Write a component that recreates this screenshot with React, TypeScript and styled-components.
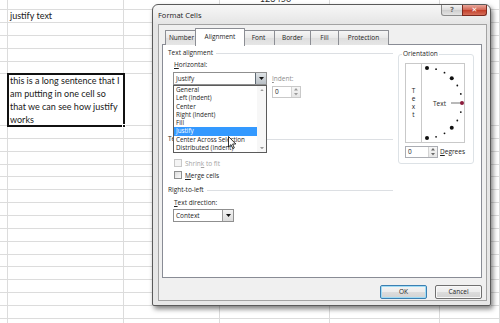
import React from "react";
import styled, { createGlobalStyle, css } from "styled-components";

const Global = createGlobalStyle`
  html, body { margin: 0; padding: 0; background: #fff; }
  body { width: 500px; height: 323px; overflow: hidden; font-family: "Open Sans", "Noto Sans", sans-serif; }
  * { box-sizing: border-box; }
`;

const COLS = [8, 116, 96, 110, 110, 60];
const ROWS = [10.2, 12.87, 12.87, 12.87, 12.87, 12.87, 51.45, ...Array(16).fill(12.87)];

const Stage = styled.div`
  position: relative;
  width: 500px;
  height: 323px;
  overflow: hidden;
  background: #fff;
`;

const Sheet = styled.div`
  display: grid;
  grid-template-columns: ${COLS.map((c) => c + "px").join(" ")};
  grid-template-rows: ${ROWS.map((r) => r + "px").join(" ")};
  width: 500px;
`;

const Cell = styled.div<{ $selected?: boolean }>`
  position: relative;
  border-right: 1px solid #dcdcdc;
  border-bottom: 1px solid #dcdcdc;
  font-family: Lato, "Open Sans", sans-serif;
  font-size: 9px;
  color: #202020;
  line-height: 12.87px;
  padding-left: 2px;
  white-space: nowrap;
  overflow: visible;
  ${(p) =>
    p.$selected &&
    css`
      outline: 2px solid #111;
      outline-offset: -1px;
      z-index: 1;
      line-height: 13px;
    `}
`;

const HeaderNum = styled.div`
  text-align: center;
  transform: translateY(-7px);
  color: #303030;
`;

const FillHandle = styled.span`
  position: absolute;
  right: -3px;
  bottom: -3px;
  width: 4px;
  height: 4px;
  background: #111;
  border: 1px solid #fff;
`;

/* ---------- dialog ---------- */

const Window = styled.div`
  position: absolute;
  left: 152px;
  top: 4px;
  width: 339px;
  height: 302px;
  border: 1px solid #5a5a5a;
  border-radius: 6px 6px 2px 2px;
  background: linear-gradient(#f7f7f7, #e4e4e4 20px, #e7e7e7);
  box-shadow: 2px 3px 5px rgba(0, 0, 0, 0.5);
  display: flex;
  flex-direction: column;
`;

const TitleBar = styled.div`
  height: 19px;
  display: flex;
  align-items: flex-start;
  padding-left: 5px;
`;

const Title = styled.div`
  margin-top: 5px;
  font-size: 7.5px;
  line-height: 10px;
  color: #1a1a1a;
`;

const Caption = styled.div`
  margin-left: auto;
  margin-right: 3px;
  display: flex;
`;

const CaptionBtn = styled.div<{ $close?: boolean }>`
  width: ${(p) => (p.$close ? 25 : 22)}px;
  height: 11px;
  border: 1px solid ${(p) => (p.$close ? "#7c2a1f" : "#8a8a8a")};
  border-top: none;
  margin-left: -1px;
  border-radius: ${(p) => (p.$close ? "0 0 3px 0" : "0 0 0 3px")};
  background: ${(p) =>
    p.$close
      ? "linear-gradient(#e9a89c, #d46a58 45%, #c4412c 55%, #d5705b)"
      : "linear-gradient(#f4f4f4, #dedede 45%, #cfcfcf 55%, #e4e4e4)"};
  display: flex;
  align-items: center;
  justify-content: center;
  font-family: "DejaVu Sans", sans-serif;
  font-weight: bold;
  font-size: 7px;
  color: ${(p) => (p.$close ? "#fff" : "#6a6a6a")};
  line-height: 1;
`;

const Client = styled.div`
  margin: 0 3px 4px 5px;
  flex: 1;
  border: 1px solid #a3a3a3;
  background: #f0f0f0;
  padding: 3px 0 0 3px;
  display: flex;
  flex-direction: column;
`;

const Tabs = styled.div`
  display: flex;
  align-items: flex-start;
  height: 17px;
  padding-left: 3px;
  position: relative;
  z-index: 2;
`;

const Tab = styled.div<{ $w: number; $active?: boolean }>`
  width: ${(p) => p.$w + 1}px;
  margin-right: -1px;
  height: 15px;
  margin-top: 2px;
  border: 1px solid #8c8e94;
  border-bottom: none;
  border-radius: 1px 1px 0 0;
  background: linear-gradient(#f6f6f6, #e8e8e8 50%, #dedede 50%, #e6e6e6);
  font-size: 6.5px;
  line-height: 13px;
  text-align: center;
  color: #1e1e1e;
  ${(p) =>
    p.$active &&
    css`
      position: relative;
      width: ${p.$w + 5}px;
      margin-left: -2px;
      margin-right: -3px;
      height: 18px;
      margin-top: 0;
      background: #fff;
      line-height: 15px;
      z-index: 3;
    `}
`;

const Panel = styled.div`
  position: relative;
  width: 320px;
  height: 234px;
  margin-top: -1px;
  border: 1px solid #898c95;
  background: #fff;
  padding: 3px 0 0 5px;
  display: flex;
  align-items: flex-start;
  font-size: 6.5px;
  color: #1e1e1e;
`;

const LeftCol = styled.div`
  width: 225px;
  display: flex;
  flex-direction: column;
`;

const SectionTitle = styled.div<{ $mt?: number }>`
  display: flex;
  align-items: center;
  height: 10px;
  line-height: 10px;
  margin-top: ${(p) => p.$mt || 0}px;
  white-space: nowrap;
  &::after {
    content: "";
    flex: 1;
    margin-left: 3px;
    border-top: 1px solid #dcdfe3;
  }
`;

const Label = styled.div<{ $mt?: number; $disabled?: boolean }>`
  height: 10px;
  line-height: 10px;
  margin-left: 6px;
  margin-top: ${(p) => p.$mt || 0}px;
  color: ${(p) => (p.$disabled ? "#8d8d8d" : "#1e1e1e")};
  white-space: nowrap;
`;

const AlignRow = styled.div`
  display: flex;
  margin-top: 2px;
`;

const Stack = styled.div`
  display: flex;
  flex-direction: column;
  gap: 2px;
`;

/* the part of the dialog hidden under the open drop-down list */
const HiddenBlock = styled.div`
  height: 27px;
`;

const IndentCol = styled.div`
  display: flex;
  flex-direction: column;
  gap: 2px;
  margin-top: 14px;
  margin-left: 5px;
  & > ${Label} {
    margin-left: 0;
  }
`;

const Select = styled.div<{ $w: number; $mt?: number }>`
  width: ${(p) => p.$w}px;
  height: 13px;
  margin-left: 5px;
  margin-top: ${(p) => p.$mt || 0}px;
  border: 1px solid #8f8f8f;
  background: #fff;
  display: flex;
  align-items: stretch;
`;

const SelectValue = styled.div`
  flex: 1;
  padding-left: 2px;
  line-height: 11px;
`;

const SelectBtn = styled.div<{ $pressed?: boolean }>`
  width: 11px;
  border-left: 1px solid ${(p) => (p.$pressed ? "#5f6a73" : "#9a9a9a")};
  background: ${(p) =>
    p.$pressed ? "linear-gradient(#dfe3e6, #b9c0c6)" : "linear-gradient(#f3f3f3, #dcdcdc)"};
  display: flex;
  align-items: center;
  justify-content: center;
`;

const Spin = styled.div<{ $w: number; $disabled?: boolean }>`
  width: ${(p) => p.$w}px;
  height: 12px;
  border: 1px solid ${(p) => (p.$disabled ? "#c9c9c9" : "#abadb3")};
  background: #fff;
  display: flex;
  align-items: stretch;
`;

const SpinValue = styled.div`
  flex: 1;
  padding-left: 2px;
  line-height: 10px;
`;

const SpinArrows = styled.div`
  width: 9px;
  border-left: 1px solid #d4d4d4;
  background: linear-gradient(#f6f6f6, #e6e6e6);
  display: flex;
  flex-direction: column;
  align-items: center;
  justify-content: space-around;
`;

const CheckRow = styled.div<{ $mt?: number; $disabled?: boolean }>`
  display: flex;
  align-items: center;
  height: 12px;
  padding-left: 6px;
  margin-top: ${(p) => p.$mt || 0}px;
  gap: 3px;
  color: ${(p) => (p.$disabled ? "#a3a3a3" : "#1e1e1e")};
`;

const CheckBox = styled.span<{ $disabled?: boolean }>`
  width: 8px;
  height: 8px;
  border: 1px solid ${(p) => (p.$disabled ? "#c8c8c8" : "#8e8f8f")};
  background: ${(p) => (p.$disabled ? "#f4f4f4" : "linear-gradient(135deg, #dcdcdc, #fbfbfb)")};
`;

const Orientation = styled.fieldset`
  margin: 1px 0 0 5px;
  width: 76px;
  min-width: 0;
  border: 1px solid #dde2e6;
  border-radius: 3px;
  padding: 4px 8px 5px 6px;
`;

const Legend = styled.legend`
  margin-left: -3px;
  padding: 0 1px;
  font-size: 6.5px;
  line-height: 10px;
  height: 10px;
`;

const DialRow = styled.div`
  display: flex;
  height: 80px;
`;

const VertBox = styled.div`
  width: 17px;
  border: 1px solid #c9c9c9;
  display: flex;
  flex-direction: column;
  align-items: center;
  justify-content: center;
  line-height: 8px;
  font-size: 6.5px;
`;

const DialBox = styled.div`
  width: 44px;
  margin-left: -1px;
  border: 1px solid #c9c9c9;
`;

const DegRow = styled.div`
  display: flex;
  align-items: center;
  margin-top: 3px;
  gap: 2px;
`;

const DegLabel = styled.div`
  line-height: 10px;
`;

const DropList = styled.div`
  position: absolute;
  left: 10px;
  top: 40px;
  width: 94px;
  height: 68px;
  border: 1px solid #5b5b5b;
  background: #fff;
  display: flex;
  z-index: 5;
`;

const Items = styled.div`
  flex: 1;
`;

const Item = styled.div<{ $hl?: boolean }>`
  height: 8.3px;
  line-height: 8.3px;
  font-size: 6.3px;
  padding-left: 2px;
  white-space: nowrap;
  overflow: hidden;
  color: ${(p) => (p.$hl ? "#fff" : "#1e1e1e")};
  background: ${(p) => (p.$hl ? "#3399ff" : "transparent")};
`;

const ScrollBar = styled.div`
  width: 9px;
  background: #f7f7f7;
  display: flex;
  flex-direction: column;
  align-items: center;
  justify-content: space-between;
  padding: 3px 0;
`;

const Cursor = styled.svg`
  position: absolute;
  left: 65px;
  top: 91px;
  z-index: 6;
`;

const ButtonRow = styled.div`
  display: flex;
  justify-content: flex-end;
  gap: 8px;
  width: 320px;
  margin-top: 7px;
`;

const Btn = styled.div<{ $default?: boolean }>`
  width: 47px;
  height: 14px;
  border: 1px solid ${(p) => (p.$default ? "#3c7fb1" : "#707070")};
  border-radius: 2px;
  background: linear-gradient(#f4f4f4, #ececec 50%, #dddddd 50%, #d3d3d3);
  box-shadow: ${(p) => (p.$default ? "inset 0 0 0 1px #9fdcf6" : "inset 0 0 0 1px #f8f8f8")};
  font-size: 6.5px;
  line-height: 12px;
  text-align: center;
  color: #1e1e1e;
`;

const Tri = ({ up, c = "#111", s = 5 }: { up?: boolean; c?: string; s?: number }) => (
  <svg width={s} height={s * 0.6} viewBox="0 0 10 6">
    <polygon points={up ? "0,6 10,6 5,0" : "0,0 10,0 5,6"} fill={c} />
  </svg>
);

function Dial() {
  const cx = 5;
  const cy = 39;
  const r = 35;
  const dots: React.ReactNode[] = [];
  for (let a = -90; a <= 90; a += 15) {
    if (a === 0) continue;
    const rad = (a * Math.PI) / 180;
    const x = cx + r * Math.cos(rad);
    const y = cy - r * Math.sin(rad);
    const big = a % 45 === 0;
    dots.push(<circle key={a} cx={x} cy={y} r={big ? 2 : 0.9} fill="#111" />);
  }
  return (
    <svg width={42} height={78}>
      {dots}
      <text x={11} y={41.5} fontSize={6.5} fontFamily="Open Sans, sans-serif" fill="#1e1e1e">
        Text
      </text>
      <line x1={29} y1={cy} x2={39} y2={cy} stroke="#8a8a8a" strokeWidth={1.2} />
      <circle cx={cx + r} cy={cy} r={2} fill="#8c1c3c" />
    </svg>
  );
}

const TABS = [
  { label: "Number", w: 32 },
  { label: "Alignment", w: 45, active: true },
  { label: "Font", w: 32 },
  { label: "Border", w: 36 },
  { label: "Fill", w: 28 },
  { label: "Protection", w: 50 },
];

const LIST = [
  "General",
  "Left (Indent)",
  "Center",
  "Right (Indent)",
  "Fill",
  "Justify",
  "Center Across Selection",
  "Distributed (Indent)",
];

export default function App() {
  return (
    <>
      <Global />
      <Stage>
        <Sheet>
          {ROWS.map((_, r) =>
            COLS.map((__, c) => {
              const key = `${r}-${c}`;
              if (r === 0 && c === 3)
                return (
                  <Cell key={key}>
                    <HeaderNum>123456</HeaderNum>
                  </Cell>
                );
              if (r === 1 && c === 1) return <Cell key={key}>justify text</Cell>;
              if (r === 6 && c === 1)
                return (
                  <Cell key={key} $selected>
                    <div>this is a long sentence that I</div>
                    <div>am putting in one cell so</div>
                    <div>that we can see how justify</div>
                    <div>works</div>
                    <FillHandle />
                  </Cell>
                );
              return <Cell key={key} />;
            })
          )}
        </Sheet>

        <Window>
          <TitleBar>
            <Title>Format Cells</Title>
            <Caption>
              <CaptionBtn>?</CaptionBtn>
              <CaptionBtn $close>✕</CaptionBtn>
            </Caption>
          </TitleBar>
          <Client>
            <Tabs>
              {TABS.map((t) => (
                <Tab key={t.label} $w={t.w} $active={t.active}>
                  {t.label}
                </Tab>
              ))}
            </Tabs>
            <Panel>
              <LeftCol>
                <SectionTitle>Text alignment</SectionTitle>
                <AlignRow>
                  <Stack>
                    <Label>
                      <u>H</u>orizontal:
                    </Label>
                    <Select $w={94}>
                      <SelectValue>Justify</SelectValue>
                      <SelectBtn $pressed>
                        <Tri />
                      </SelectBtn>
                    </Select>
                    <HiddenBlock />
                  </Stack>
                  <IndentCol>
                    <Label $disabled>
                      <u>I</u>ndent:
                    </Label>
                    <Spin $w={29} $disabled>
                      <SpinValue>0</SpinValue>
                      <SpinArrows>
                        <Tri up c="#9a9a9a" s={4} />
                        <Tri c="#9a9a9a" s={4} />
                      </SpinArrows>
                    </Spin>
                  </IndentCol>
                </AlignRow>
                <SectionTitle $mt={20}>Te</SectionTitle>
                <CheckRow $mt={1} />
                <CheckRow $disabled>
                  <CheckBox $disabled />
                  <span>
                    Shrin<u>k</u> to fit
                  </span>
                </CheckRow>
                <CheckRow>
                  <CheckBox />
                  <span>
                    <u>M</u>erge cells
                  </span>
                </CheckRow>
                <SectionTitle $mt={4}>Right-to-left</SectionTitle>
                <Label $mt={3}>
                  <u>T</u>ext direction:
                </Label>
                <Select $w={61} $mt={1}>
                  <SelectValue>Context</SelectValue>
                  <SelectBtn>
                    <Tri />
                  </SelectBtn>
                </Select>
              </LeftCol>

              <Orientation>
                <Legend>Orientation</Legend>
                <DialRow>
                  <VertBox>
                    <span>T</span>
                    <span>e</span>
                    <span>x</span>
                    <span>t</span>
                  </VertBox>
                  <DialBox>
                    <Dial />
                  </DialBox>
                </DialRow>
                <DegRow>
                  <Spin $w={36}>
                    <SpinValue>0</SpinValue>
                    <SpinArrows>
                      <Tri up c="#6a6a6a" s={4} />
                      <Tri c="#6a6a6a" s={4} />
                    </SpinArrows>
                  </Spin>
                  <DegLabel>
                    <u>D</u>egrees
                  </DegLabel>
                </DegRow>
              </Orientation>

              <DropList>
                <Items>
                  {LIST.map((it) => (
                    <Item key={it} $hl={it === "Justify"}>
                      {it}
                    </Item>
                  ))}
                </Items>
                <ScrollBar>
                  <Tri up c="#9a9a9a" s={4} />
                  <Tri c="#9a9a9a" s={4} />
                </ScrollBar>
              </DropList>

              <Cursor width={9} height={14} viewBox="0 0 9 14">
                <path
                  d="M0.5 0.5 L0.5 11 L3 8.6 L4.8 12.6 L6.3 11.9 L4.6 8 L7.8 8 Z"
                  fill="#fff"
                  stroke="#000"
                  strokeWidth={0.8}
                  strokeLinejoin="round"
                />
              </Cursor>
            </Panel>
            <ButtonRow>
              <Btn $default>OK</Btn>
              <Btn>Cancel</Btn>
            </ButtonRow>
          </Client>
        </Window>
      </Stage>
    </>
  );
}
